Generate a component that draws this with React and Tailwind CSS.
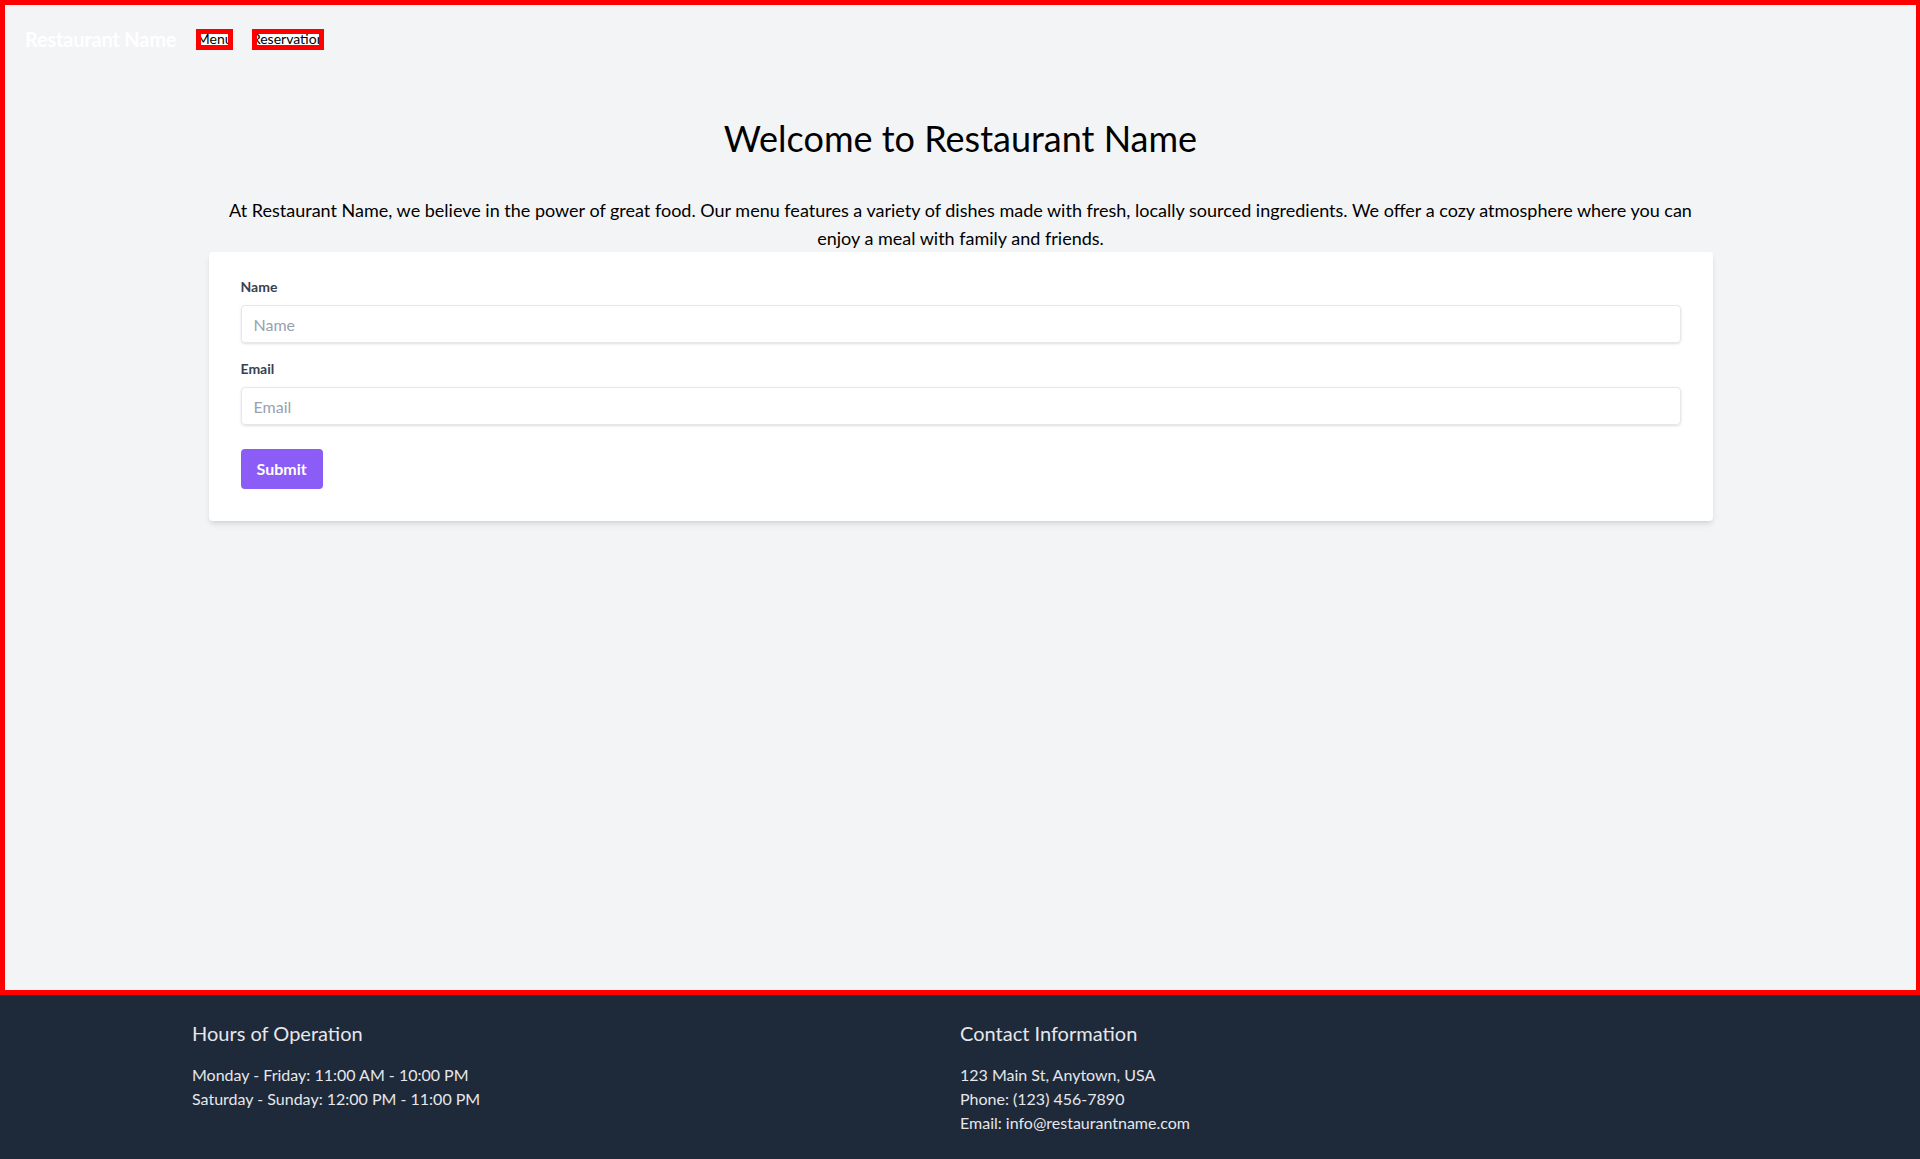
import React from 'react';

const font = { fontFamily: '"Segoe UI", Lato, "Open Sans", sans-serif' };

const NavLink = ({ label, width }) => (
  <a
    href="#"
    className={`flex h-[21px] items-center justify-center overflow-hidden border-[5px] border-[#ff0000] bg-white text-sm leading-none text-black ${width}`}
  >
    <span className="whitespace-nowrap">{label}</span>
  </a>
);

export default function App() {
  return (
    <div className="flex min-h-screen flex-col bg-gray-100" style={font}>
      {/* Top area (outlined) */}
      <div className="flex flex-1 flex-col border-[5px] border-r-4 border-[#ff0000]">
        <header className="flex items-center p-5">
          <span className="text-xl font-bold tracking-[-0.2px] text-white">Restaurant Name</span>
          <nav className="ml-[20px] flex items-center gap-[19px]">
            <NavLink label="Menu" width="w-[37px]" />
            <NavLink label="Reservation" width="w-[72px]" />
          </nav>
        </header>

        <main className="mx-auto w-full max-w-[1536px] px-4 pt-[45px]">
          <h1 className="mb-[38px] text-center text-4xl text-black">Welcome to Restaurant Name</h1>
          <p className="text-center text-lg text-black">
            At Restaurant Name, we believe in the power of great food. Our menu features a variety of dishes made with fresh, locally sourced ingredients. We offer a cozy atmosphere where you can enjoy a meal with family and friends.
          </p>

          <form className="mb-4 rounded bg-white px-8 pt-[25px] pb-8 shadow-md">
            <div className="mb-4">
              <label className="mb-2 block text-sm font-bold text-gray-700">Name</label>
              <input
                type="text"
                placeholder="Name"
                className="h-[38px] w-full appearance-none rounded border border-gray-200 px-3 py-2 leading-tight text-gray-700 shadow-sm placeholder:text-gray-400 focus:outline-none"
              />
            </div>
            <div className="mb-6">
              <label className="mb-2 block text-sm font-bold text-gray-700">Email</label>
              <input
                type="email"
                placeholder="Email"
                className="h-[38px] w-full appearance-none rounded border border-gray-200 px-3 py-2 leading-tight text-gray-700 shadow-sm placeholder:text-gray-400 focus:outline-none"
              />
            </div>
            <button type="button" className="h-10 rounded bg-[#8b5cf6] px-4 py-2 font-bold text-white">
              Submit
            </button>
          </form>
        </main>
      </div>

      {/* Footer */}
      <footer className="bg-gray-800 py-6 text-gray-200">
        <div className="mx-auto grid w-full max-w-[1536px] grid-cols-2">
          <div>
            <h3 className="mb-4 text-xl">Hours of Operation</h3>
            <p>Monday - Friday: 11:00 AM - 10:00 PM</p>
            <p>Saturday - Sunday: 12:00 PM - 11:00 PM</p>
          </div>
          <div>
            <h3 className="mb-4 text-xl">Contact Information</h3>
            <p>123 Main St, Anytown, USA</p>
            <p>Phone: (123) 456-7890</p>
            <p>Email: info@restaurantname.com</p>
          </div>
        </div>
      </footer>
    </div>
  );
}
